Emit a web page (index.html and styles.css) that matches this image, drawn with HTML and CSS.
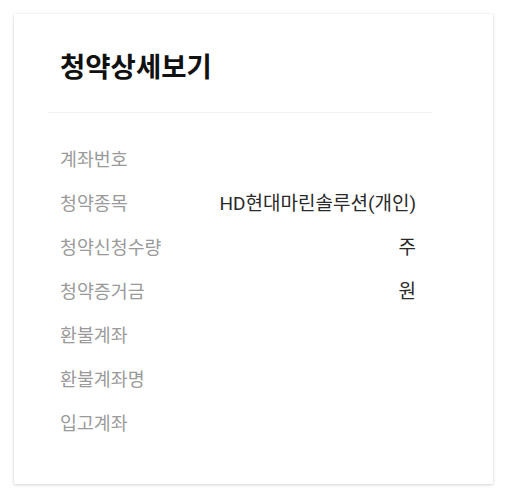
FILE: index.html
```html
<!DOCTYPE html>
<html lang="ko">
<head>
<meta charset="utf-8">
<title>청약상세보기</title>
<link rel="stylesheet" href="styles.css">
</head>
<body>
<div class="page">
  <section class="card">
    <header class="card-head">
      <h1 class="title">청약상세보기</h1>
    </header>
    <dl class="detail">
      <div class="row"><dt class="label">계좌번호</dt><dd class="value"></dd></div>
      <div class="row"><dt class="label">청약종목</dt><dd class="value">HD현대마린솔루션(개인)</dd></div>
      <div class="row"><dt class="label">청약신청수량</dt><dd class="value">주</dd></div>
      <div class="row"><dt class="label">청약증거금</dt><dd class="value">원</dd></div>
      <div class="row"><dt class="label">환불계좌</dt><dd class="value"></dd></div>
      <div class="row"><dt class="label">환불계좌명</dt><dd class="value"></dd></div>
      <div class="row"><dt class="label">입고계좌</dt><dd class="value"></dd></div>
    </dl>
  </section>
</div>
</body>
</html>
```

FILE: styles.css
```css
html, body {
  margin: 0;
  padding: 0;
  background: #ffffff;
}

body {
  font-family: Roboto, "Noto Sans CJK KR", sans-serif;
}

.page {
  padding: 14px 15px 15px 14px;
}

.card {
  width: 479px;
  height: 470px;
  box-sizing: border-box;
  padding: 33px 61px 40px 33px;
  background: #ffffff;
  box-shadow: 0 1px 3px rgba(0, 0, 0, 0.16), 0 0 1px rgba(0, 0, 0, 0.12);
}

.card-head {
  padding: 0 0 29px 13px;
  border-bottom: 1px solid #f3f3f3;
}

.title {
  margin: 0;
  font-family: "Noto Sans CJK KR", sans-serif;
  font-size: 27.5px;
  line-height: 36px;
  font-weight: 700;
  color: #111111;
}

.detail {
  margin: 25px 0 0 0;
  padding: 0 16px 0 13px;
}

.row {
  display: flex;
  justify-content: space-between;
  align-items: center;
  height: 44px;
}

.label {
  font-size: 18.4px;
  line-height: 26px;
  color: #9a9a9a;
}

.value {
  margin: 0;
  font-size: 19px;
  line-height: 26px;
  color: #2a2a2a;
  text-align: right;
}
```
